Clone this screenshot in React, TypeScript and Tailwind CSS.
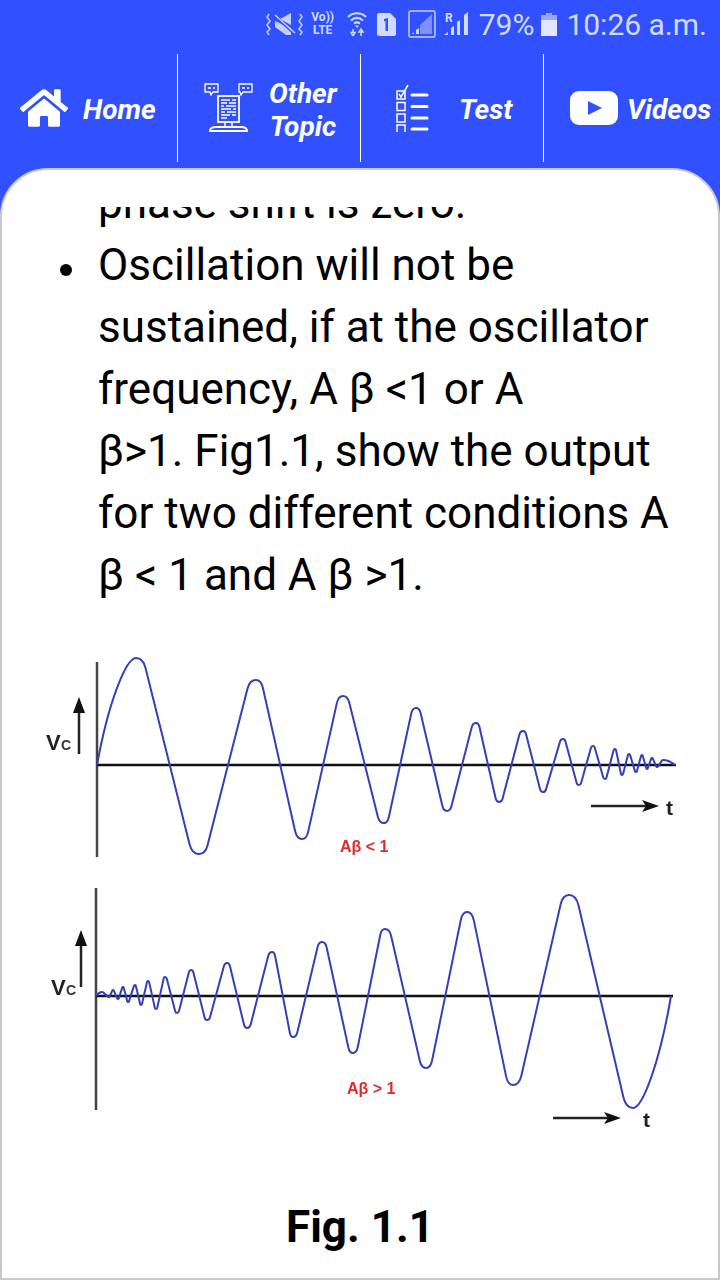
import React from "react";
import { FaHome } from "react-icons/fa";

const decay: number[][] = [
  [97, 765], [136, 658], [199, 854], [256, 680], [302, 839], [343, 696], [384, 823], [416, 708], [447, 811],
  [476, 723], [499, 802], [523, 731], [543, 792], [563, 739], [579, 785], [593, 746], [605, 779], [615, 749],
  [622, 775], [629, 754], [636, 772], [642, 755], [647, 769], [652, 758], [657, 767], [663, 760], [675, 765],
];

const growth: number[][] = [
  [96, 996], [102, 992], [109, 997], [113, 990], [118, 999], [123, 987], [128, 1002], [135, 985], [141, 1005],
  [148, 981], [156, 1009], [165, 977], [177, 1013], [191, 970], [207, 1020], [227, 963], [247, 1028], [272, 952],
  [293, 1037], [322, 942], [353, 1053], [385, 929], [426, 1068], [467, 912], [513, 1085], [569, 895], [633, 1108],
  [671, 996],
];

// each swing is a steep straight flank with a flat round cap at both tips,
// the first and last swing sit on the axis and stay one soft curve
const wavePath = (pts: number[][]) => {
  const w = 0.15;
  const s = 0.05;
  const k = (0.6 * s) / (1 - 2 * s);
  let d = `M${pts[0][0]} ${pts[0][1]}`;
  for (let i = 1; i < pts.length; i++) {
    const [x0, y0] = pts[i - 1];
    const [x1, y1] = pts[i];
    const dx = x1 - x0;
    const dy = y1 - y0;
    if (i === 1) {
      d += ` C${x0 + dx * 0.3} ${y0 + dy * 0.6} ${x1 - dx * 0.25} ${y1} ${x1} ${y1}`;
    } else if (i === pts.length - 1) {
      d += ` C${x0 + dx * 0.25} ${y0} ${x1 - dx * 0.3} ${y1 - dy * 0.6} ${x1} ${y1}`;
    } else {
      const fx = dx * (1 - 2 * w);
      const fy = dy * (1 - 2 * s);
      const px = x0 + w * dx;
      const py = y0 + s * dy;
      const qx = x1 - w * dx;
      const qy = y1 - s * dy;
      d += ` C${x0 + w * dx * 0.6} ${y0} ${px - fx * k} ${py - fy * k} ${px} ${py}`;
      d += ` L${qx} ${qy}`;
      d += ` C${qx + fx * k} ${qy + fy * k} ${x1 - w * dx * 0.6} ${y1} ${x1} ${y1}`;
    }
  }
  return d;
};

const Diagram = () => (
  <svg viewBox="2 640 716 530" className="block w-[716px] h-[530px] blur-[0.5px]" style={{ fontFamily: "'Liberation Sans', sans-serif" }}>
    {/* top graph */}
    <path d="M97 662V857" stroke="#444" strokeWidth="2.500" fill="none" />
    <path d="M97 765H676" stroke="#111" strokeWidth="2.500" fill="none" />
    <path d={wavePath(decay)} stroke="#3440b8" strokeWidth="2" fill="none" />
    <path d="M79 754V708" stroke="#222" strokeWidth="2.500" />
    <path d="M79 697L85 713H73Z" fill="#111" />
    <text x="46" y="750" fontSize="22" fontWeight="700" fill="#222">V</text>
    <text x="61" y="750" fontSize="14" fontWeight="700" fill="#333">C</text>
    <path d="M591 806H650" stroke="#222" strokeWidth="2.500" />
    <path d="M659 806L642 800L646 806L642 812Z" fill="#111" />
    <text x="666" y="815" fontSize="21" fontWeight="700" fill="#222">t</text>
    <text x="340" y="852" fontSize="16" fontWeight="700" fill="#e02b2b">Aβ &lt; 1</text>

    {/* bottom graph */}
    <path d="M96 888V1110" stroke="#444" strokeWidth="2.500" fill="none" />
    <path d="M96 996H673" stroke="#111" strokeWidth="2.500" fill="none" />
    <path d={wavePath(growth)} stroke="#3440b8" strokeWidth="2" fill="none" />
    <path d="M81 987V940" stroke="#222" strokeWidth="2.500" />
    <path d="M81 930L87 946H75Z" fill="#111" />
    <text x="51" y="995" fontSize="22" fontWeight="700" fill="#222">V</text>
    <text x="66" y="995" fontSize="14" fontWeight="700" fill="#333">C</text>
    <path d="M553 1118H612" stroke="#222" strokeWidth="2.500" />
    <path d="M621 1118L604 1112L608 1118L604 1124Z" fill="#111" />
    <text x="643" y="1127" fontSize="21" fontWeight="700" fill="#222">t</text>
    <text x="347" y="1094" fontSize="16" fontWeight="700" fill="#e02b2b">Aβ &gt; 1</text>
  </svg>
);

const MuteIcon = () => (
  <svg width="37" height="23" viewBox="0 0 37 23" fill="none">
    <path d="M3 1L1 4L4 8L1 12L4 16L1 19L3 22" stroke="#c6cfff" strokeWidth="1.500" />
    <path d="M34 1L36 4L33 8L36 12L33 16L36 19L34 22" stroke="#c6cfff" strokeWidth="1.500" />
    <path d="M14 6L25 0V12Z" fill="#c6cfff" />
    <path d="M9 8L25 15V22H20L9 14Z" fill="#c6cfff" />
    <path d="M8 3L29 22" stroke="#3151ff" strokeWidth="1.500" />
    <path d="M9 2L29 20" stroke="#c6cfff" strokeWidth="1.500" />
  </svg>
);

const WifiIcon = () => (
  <svg width="20" height="24" viewBox="0 0 20 24" fill="none">
    <path d="M1 5C6 0 14 0 19 5" stroke="#d3daff" strokeWidth="2" />
    <path d="M4 8.500C8 5 12 5 16 8.500" stroke="#d3daff" strokeWidth="2" />
    <path d="M7 11.500C9 10 11 10 13 11.500" stroke="#d3daff" strokeWidth="2" />
    <path d="M10 16L8 13.500H12Z" fill="#d3daff" />
    <path d="M6 17V21M4 20.500L6 24L8 20.500Z" stroke="#d3daff" strokeWidth="1.500" />
    <path d="M14 24V20M12 20L14 17L16 20Z" stroke="#d3daff" strokeWidth="1.500" />
  </svg>
);

const SimIcon = () => (
  <svg width="19" height="23" viewBox="0 0 19 23">
    <path d="M2 0H13L19 6V21C19 22 18 23 17 23H2C1 23 0 22 0 21V2C0 1 1 0 2 0Z" fill="#d3daff" />
    <path d="M7 6L11 5V18H8.500V8L7 8.500Z" fill="#3151ff" />
  </svg>
);

const BoxSignalIcon = () => (
  <svg width="28" height="28" viewBox="0 0 28 28" fill="none">
    <rect x="1" y="1" width="26" height="26" rx="1.500" stroke="#c6cfff" strokeWidth="1.500" />
    <path d="M24 4V24H12V15Z" fill="#7d90ff" />
    <path d="M4 24H6V22ZM8 24H11V18L8 20Z" fill="#d3daff" />
  </svg>
);

const SignalIcon = () => (
  <svg width="25" height="24" viewBox="0 0 25 24">
    <text x="1" y="10" fontSize="12" fontWeight="700" fill="#d3daff" fontFamily="Roboto, sans-serif">R</text>
    <path d="M0 23L4 20V23ZM7 23V16L10 14V23ZM13 23V10L16 8V23ZM20 23V3L24 0V23Z" fill="#d3daff" />
  </svg>
);

const BatteryIcon = () => (
  <svg width="16" height="23" viewBox="0 0 16 23">
    <path d="M5 0H11V2H16V23H0V2H5Z" fill="#9aa9ff" />
    <path d="M0 7H16V23H0Z" fill="#e2e6ff" />
  </svg>
);

const OtherTopicIcon = () => (
  <svg width="50" height="50" viewBox="0 0 50 50" fill="none" stroke="#fff" strokeWidth="1.300">
    <path d="M1 1H14V9H9L7 12L6 9H1Z" />
    <path d="M35 1H48V9H39L37 12L36 9H35Z" />
    <path d="M4 5H7M9 5H11M38 5H41M43 5H45" strokeWidth="1.500" />
    <rect x="14" y="13" width="21" height="26" strokeWidth="1.800" />
    <path d="M17 17H26M28 17H32M17 20H23M25 20H32M17 23H20M22 23H32M17 26H27M29 26H32M17 29H21M23 29H32M17 32H26M28 32H32M17 35H23" strokeWidth="1.400" />
    <path d="M21 39V44M28 39V44" strokeWidth="1.500" />
    <path d="M6 48C6 45 9 44 12 44H37C40 44 43 45 43 48Z" strokeWidth="1.800" />
  </svg>
);

const TestIcon = () => (
  <svg width="34" height="48" viewBox="0 0 34 48" fill="none" stroke="#fff">
    <rect x="1" y="7" width="8" height="8" strokeWidth="1.500" />
    <path d="M3 10L5 13L12 1" strokeWidth="1.500" />
    <rect x="1" y="18.500" width="8" height="8" strokeWidth="1.500" />
    <rect x="1" y="30" width="8" height="8" strokeWidth="1.500" />
    <rect x="1" y="41" width="8" height="8" strokeWidth="1.500" />
    <path d="M16 11H31M16 22.500H31M16 34H31M16 45H31" strokeWidth="3" strokeLinecap="round" />
  </svg>
);

const PlayIcon = () => (
  <svg width="48" height="34" viewBox="0 0 48 34">
    <rect width="48" height="34" rx="9" fill="#fff" />
    <path d="M18 10L32 17L18 24Z" fill="#3151ff" />
  </svg>
);

export default function App() {
  return (
    <div className="h-[1280px] w-[720px] overflow-hidden bg-[#3151ff] font-['Roboto',sans-serif]">
      {/* status bar */}
      <div className="flex h-[48px] items-center justify-end pr-[13px] text-[#d3daff]">
        <MuteIcon />
        <div className="ml-[8px] flex w-[24px] flex-col items-center text-[12px] font-bold leading-[13px]">
          <span>Vo))</span>
          <span>LTE</span>
        </div>
        <div className="ml-[12px]"><WifiIcon /></div>
        <div className="ml-[10px]"><SimIcon /></div>
        <div className="ml-[12px]"><BoxSignalIcon /></div>
        <div className="ml-[8px]"><SignalIcon /></div>
        <span className="ml-[10px] mt-[2px] text-[30px] leading-none">79%</span>
        <div className="ml-[7px]"><BatteryIcon /></div>
        <span className="ml-[9px] mt-[2px] text-[30px] leading-none">10:26 a.m.</span>
      </div>

      {/* nav */}
      <nav className="mt-[6px] flex h-[108px] text-[28px] font-bold italic leading-[33px] text-white">
        <div className="flex w-[178px] items-center border-r border-white pl-[20px]">
          <FaHome size={48} className="text-white" />
          <span className="ml-[15px] mt-[2px]">Home</span>
        </div>
        <div className="flex w-[183px] items-center border-r border-white pl-[26px]">
          <OtherTopicIcon />
          <span className="ml-[15px] mt-[3px] text-center">Other<br />Topic</span>
        </div>
        <div className="flex w-[183px] items-center border-r border-white pl-[35px]">
          <TestIcon />
          <span className="ml-[29px] mt-[2px]">Test</span>
        </div>
        <div className="flex flex-1 items-center pl-[26px]">
          <PlayIcon />
          <span className="ml-[9px] mt-[2px]">Videos</span>
        </div>
      </nav>

      {/* content card */}
      <div className="mt-[6px] flex h-[1112px] flex-col overflow-hidden rounded-t-[48px] border-2 border-[#c8c8d0] bg-white pt-[37px] text-black">
        <div className="flex-1 overflow-hidden">
          <div className="-mt-[35px] pl-[96px] pr-[30px] text-[44px] leading-[62px]">
            <p>phase shift is zero.</p>
            <div className="flex">
              <span className="-ml-[38px] mr-[26px] mt-[30px] h-[12px] w-[12px] shrink-0 rounded-full bg-black"></span>
              <p>
                Oscillation will not be
                <br />
                sustained, if at the oscillator
                <br />
                frequency, A β &lt;1 or A
                <br />
                β&gt;1. Fig1.1, show the output
                <br />
                for two different conditions A
                <br />
                β &lt; 1 and A β &gt;1.
              </p>
            </div>
          </div>
          <div className="mt-[34px]">
            <Diagram />
          </div>
          <p className="mt-[27px] text-center text-[44px] font-bold leading-[60px]">Fig. 1.1</p>
        </div>
      </div>
    </div>
  );
}
